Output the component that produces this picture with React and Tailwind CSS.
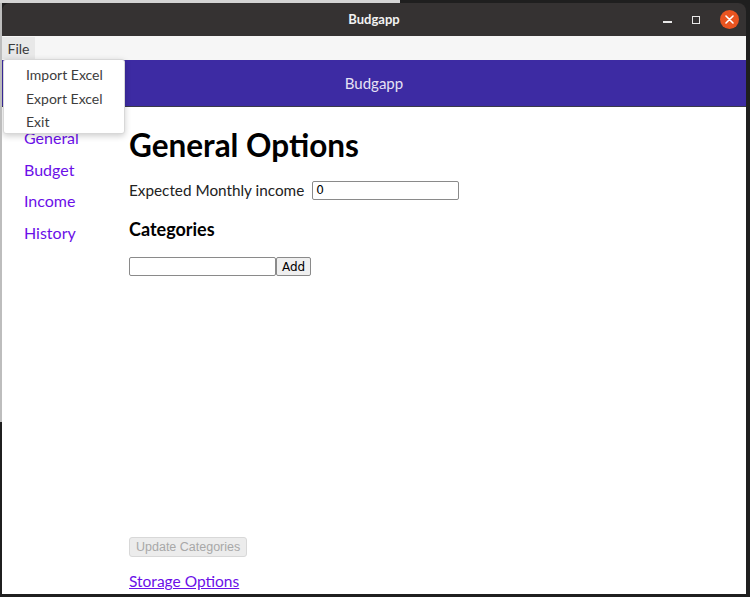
import React from 'react';

const NAV = ['General', 'Budget', 'Income', 'History'];
const MENU = ['Import Excel', 'Export Excel', 'Exit'];

const TitleBar = () => (
  <div className="h-[33px] bg-[#353232] flex items-center relative">
    <div className="flex-1 text-center text-[13px] font-bold text-[#f2f2f2] font-['Lato',sans-serif]">Budgapp</div>
    <div className="absolute right-[7px] top-[7px] flex items-center gap-[20px]">
      <div className="w-[9px] h-[1.5px] bg-[#e8e8e8] mt-[5px]" />
      <div className="w-[8px] h-[8px] border-[1.5px] border-[#e8e8e8]" />
      <div className="w-[19px] h-[19px] rounded-full bg-[#e95420] flex items-center justify-center">
        <svg width="9" height="9" viewBox="0 0 9 9">
          <path d="M1 1L8 8M8 1L1 8" stroke="#fff" strokeWidth="1.6" strokeLinecap="round" />
        </svg>
      </div>
    </div>
  </div>
);

const FileMenu = () => (
  <div className="absolute left-[1px] top-[56px] w-[122px] h-[75px] bg-white border border-[#d8d8d8] rounded-[3px] shadow-[0_2px_6px_rgba(0,0,0,0.2)] pt-[3px] z-10">
    {MENU.map((m) => (
      <div key={m} className="h-[23.5px] leading-[23.5px] pl-[22px] text-[14px] text-[#3d3d3d] font-['Lato',sans-serif]">{m}</div>
    ))}
  </div>
);

export default function App() {
  return (
    <div className="w-[750px] h-[597px] bg-[#1f1f1f] flex flex-col overflow-hidden font-['Lato',sans-serif]">
      <div className="h-[3px] flex">
        <div className="w-[400px] bg-[#d4d4d4]" />
      </div>
      <div className="flex h-[591px]">
        <div className="w-[2px] flex flex-col">
          <div className="h-[419px] bg-[#bdbdbd]" />
        </div>
        <div className="w-[744px] flex flex-col rounded-t-[8px] overflow-hidden relative">
          <TitleBar />
          <div className="h-[24px] bg-[#f6f6f6] flex">
            <div className="h-[22px] mt-[1px] w-[33px] bg-[#e8e8e8] text-[14px] text-[#3a3a3a] flex items-center justify-center">File</div>
          </div>
          <FileMenu />
          <div className="flex-1 bg-white flex flex-col">
            <div className="h-[47px] bg-[#3d2ba3] border-b border-[#3a3a4a] flex items-center justify-center text-[15px] text-[#e6e2f4]">
              Budgapp
            </div>
            <div className="flex-1 flex">
              <div className="w-[127px] pl-[22px] pt-[21px] flex flex-col gap-[11.5px]">
                {NAV.map((n) => (
                  <a key={n} href="#" className="leading-[20px] text-[16px] text-[#6b0fe8]">{n}</a>
                ))}
              </div>
              <div className="flex-1 flex flex-col pt-[20px] pb-[3px]">
                <h1 className="text-[31.5px] font-bold leading-[37px] text-black">General Options</h1>
                <div className="mt-[16px] flex items-center gap-[8px] h-[20px]">
                  <span className="text-[15.3px] text-[#222]">Expected Monthly income</span>
                  <input
                    defaultValue="0"
                    className="w-[147px] h-[19px] border border-[#8a8a8a] rounded-[2px] px-[3px] text-[12px] font-['DejaVu_Sans',sans-serif] text-black"
                  />
                </div>
                <h3 className="mt-[18px] text-[18px] font-bold leading-[22px] text-black">Categories</h3>
                <div className="mt-[17px] flex">
                  <input className="w-[147px] h-[19px] border border-[#8a8a8a] rounded-[2px]" />
                  <button className="h-[19px] px-[5px] border border-[#8a8a8a] rounded-[2px] bg-[#efefef] text-[12px] font-['DejaVu_Sans',sans-serif] text-black leading-none">Add</button>
                </div>
                <div className="mt-auto">
                  <button disabled className="h-[20px] px-[6px] border border-[#d8d8d8] rounded-[3px] bg-[#ececec] text-[12.5px] font-['Liberation_Sans',sans-serif] text-[#a8a8a8] leading-none">Update Categories</button>
                </div>
                <a href="#" className="mt-[14px] leading-[20px] text-[15.5px] text-[#6b0fe8] underline w-fit">Storage Options</a>
              </div>
            </div>
          </div>
        </div>
      </div>
    </div>
  );
}
